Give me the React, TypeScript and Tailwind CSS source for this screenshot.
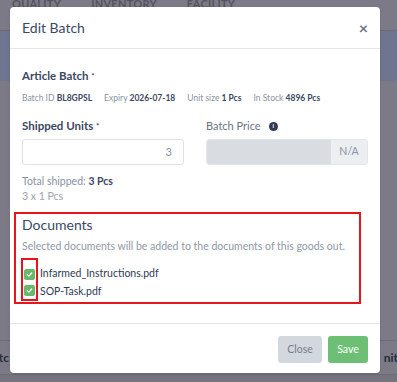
import React from "react";

const font = { fontFamily: 'Lato, "Open Sans", "Liberation Sans", sans-serif' };

export default function App() {
  return (
    <div className="relative w-[397px] h-[382px] overflow-hidden bg-[#7b7a86]" style={font}>
      {/* background page (dimmed) */}
      <div className="flex flex-col h-full">
        <div className="h-[31px] border-b border-[#6a6974] flex items-start gap-[30px] pl-[12px] text-[11px] font-bold tracking-wide text-[#55545f]">
          <span className="-mt-[4px]">QUALITY</span>
          <span className="-mt-[4px]">INVENTORY</span>
          <span className="-mt-[4px]">FACILITY</span>
        </div>
        <div className="h-[50px] bg-[#6d7590]" />
        <div className="flex-1" />
        <div className="h-[35px] border-t border-b border-[#6c6b76] flex items-center justify-between text-[12px] font-bold text-[#2a2c38]">
          <span className="-ml-[15px]">Batc</span>
          <span className="-mr-[1px]">nit</span>
        </div>
        <div className="h-[7px] bg-[#74737e]" />
      </div>

      {/* modal */}
      <div className="absolute left-[10px] top-[7px] w-[370px] h-[366px] bg-white rounded-[4px] flex flex-col shadow-sm">
        <div className="h-[42px] shrink-0 flex items-center justify-between px-[12px] border-b border-[#e3e6ea]">
          <span className="text-[14px] text-[#3b4863] leading-none mt-[1px]">Edit Batch</span>
          <span className="text-[16px] text-[#6b7385] font-bold leading-none">×</span>
        </div>

        <div className="flex-1 flex flex-col px-[12px] pt-[19px]">
          <div className="text-[11.5px] font-bold text-[#3b4863] leading-[16px]">
            Article Batch <span className="text-[8px] align-top">*</span>
          </div>
          <div className="mt-[7px] flex gap-[12px] text-[8.5px] text-[#8a92a3] leading-[14px]">
            <span>Batch ID <b className="text-[#3b4863]">BL8GPSL</b></span>
            <span>Expiry <b className="text-[#3b4863]">2026-07-18</b></span>
            <span>Unit size <b className="text-[#3b4863]">1 Pcs</b></span>
            <span>In Stock <b className="text-[#3b4863]">4896 Pcs</b></span>
          </div>

          <div className="mt-[13px] grid grid-cols-2 gap-[22px]">
            <div className="flex flex-col">
              <div className="text-[11.5px] font-bold text-[#3b4863] leading-[16px]">
                Shipped Units <span className="text-[8px] align-top">*</span>
              </div>
              <div className="mt-[5px] h-[26px] border border-[#dfe3e8] rounded-[3px] flex items-center justify-end pr-[11px] text-[11px] text-[#8a92a3]">
                3
              </div>
              <div className="mt-[9px] text-[10.5px] text-[#8a92a3] leading-[15px]">
                Total shipped: <b className="text-[#3b4863]">3 Pcs</b>
              </div>
              <div className="text-[10.5px] text-[#9aa1af] leading-[15px]">3 x 1 Pcs</div>
            </div>
            <div className="flex flex-col">
              <div className="flex items-center gap-[8px] text-[11px] text-[#6b7385] leading-[16px]">
                Batch Price
                <span className="w-[9px] h-[9px] rounded-full bg-[#2f3a55] text-white text-[6px] font-bold flex items-center justify-center leading-none">i</span>
              </div>
              <div className="mt-[5px] h-[26px] flex rounded-[3px] overflow-hidden border border-[#e3e6ea]">
                <div className="flex-1 bg-[#d9dce1]" />
                <div className="w-[36px] bg-[#eceef1] flex items-center justify-center text-[10.5px] text-[#8a92a3]">N/A</div>
              </div>
            </div>
          </div>

          <div className="mt-[8px] -ml-[8px] mr-[7px] h-[92px] border-2 border-[#e8141c] pl-[6px] pt-[2px] flex flex-col">
            <div className="text-[14px] text-[#3b4863] leading-[18px]">Documents</div>
            <div className="mt-[5px] text-[10.5px] text-[#8f97a8] leading-[14px] whitespace-nowrap">
              Selected documents will be added to the documents of this goods out.
            </div>
            <div className="mt-[5px] flex">
              <div className="-ml-[1px] border-2 border-[#e8141c] w-[17px] h-[43px] flex flex-col items-center pt-[9px] gap-[5px]">
                {[0, 1].map((i) => (
                  <span key={i} className="w-[11px] h-[11px] rounded-[2px] bg-[#66bb6a] flex items-center justify-center">
                    <svg width="7" height="7" viewBox="0 0 8 8">
                      <path d="M1.5 4.2 L3.3 5.9 L6.5 2.3" fill="none" stroke="white" strokeWidth="1.4" strokeLinecap="round" strokeLinejoin="round" />
                    </svg>
                  </span>
                ))}
              </div>
              <div className="ml-[2px] flex flex-col pt-[6px] text-[10.5px] text-[#2f3a55] leading-[18px]">
                <span>Infarmed_Instructions.pdf</span>
                <span>SOP-Task.pdf</span>
              </div>
            </div>
          </div>
        </div>

        <div className="h-[50px] shrink-0 border-t border-[#e3e6ea] flex items-center justify-end gap-[6px] px-[12px] pt-[2px]">
          <button className="w-[44px] h-[27px] rounded-[3px] bg-[#d3d7de] text-[10.5px] text-[#747c8c]">Close</button>
          <button className="w-[40px] h-[27px] rounded-[3px] bg-[#6cbf74] text-[10.5px] text-white">Save</button>
        </div>
      </div>
    </div>
  );
}
